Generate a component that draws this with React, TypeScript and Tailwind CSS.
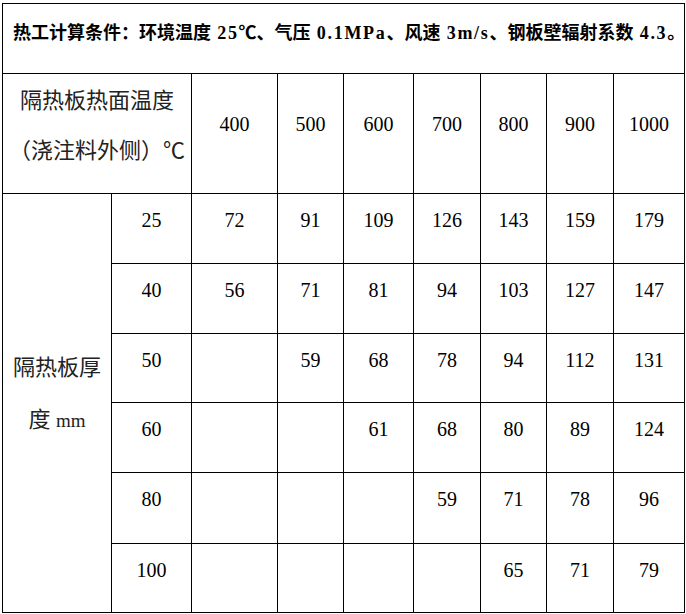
const TEMPS = ["400", "500", "600", "700", "800", "900", "1000"];

const ROWS: { t: string; h: string; v: string[] }[] = [
  { t: "25", h: "h-[70px]", v: ["72", "91", "109", "126", "143", "159", "179"] },
  { t: "40", h: "h-[70px]", v: ["56", "71", "81", "94", "103", "127", "147"] },
  { t: "50", h: "h-[69px]", v: ["", "59", "68", "78", "94", "112", "131"] },
  { t: "60", h: "h-[70px]", v: ["", "", "61", "68", "80", "89", "124"] },
  { t: "80", h: "h-[71px]", v: ["", "", "", "59", "71", "78", "96"] },
  { t: "100", h: "h-[69px]", v: ["", "", "", "", "65", "71", "79"] },
];

const cell = "border border-black align-top text-center";

// 半角字符按等宽宋体的宽度稍微拉开
function Half({ children }: { children: string }) {
  return <span className="tracking-[1.7px]">{children}</span>;
}

export default function App() {
  return (
    <div className="min-h-[614px] w-[686px] bg-white pl-[2px] pt-[3px] font-['Liberation_Serif','Noto_Sans_CJK_SC',serif] text-black">
      <table className="w-[682px] table-fixed border-collapse">
        <colgroup>
          <col className="w-[109px]" />
          <col className="w-[80px]" />
          <col className="w-[86px]" />
          <col className="w-[66px]" />
          <col className="w-[70px]" />
          <col className="w-[67px]" />
          <col className="w-[66px]" />
          <col className="w-[67px]" />
          <col className="w-[71px]" />
        </colgroup>
        <tbody>
          {/* 计算条件 */}
          <tr className="h-[70px]">
            <td
              colSpan={9}
              className="border border-black pl-[10px] pt-[17px] align-top text-[18px] leading-[24px] font-bold whitespace-nowrap"
            >
              热工计算条件：环境温度<Half> 25</Half>℃、气压<Half> 0.1MPa</Half>、风速
              <Half> 3m/s</Half>、钢板壁辐射系数<Half> 4.3</Half>。
            </td>
          </tr>

          {/* 表头 */}
          <tr className="h-[120px]">
            <td colSpan={2} className={`${cell} pt-[2px] text-[22px] leading-[50px] text-[#222]`}>
              <div>隔热板热面温度</div>
              <div>（浇注料外侧）℃</div>
            </td>
            {TEMPS.map((t) => (
              <td key={t} className={`${cell} pt-[38px] text-[20px] leading-[24px]`}>
                {t}
              </td>
            ))}
          </tr>

          {/* 数据 */}
          {ROWS.map((row, i) => (
            <tr key={row.t} className={row.h}>
              {i === 0 && (
                <td rowSpan={6} className={`${cell} pt-[148px] text-[22px] leading-[52px] text-[#222]`}>
                  <div>隔热板厚</div>
                  <div>
                    度 <span className="text-[19px]">mm</span>
                  </div>
                </td>
              )}
              <td className={`${cell} pt-[14px] text-[20px] leading-[24px]`}>{row.t}</td>
              {row.v.map((v, j) => (
                <td key={j} className={`${cell} pt-[14px] text-[20px] leading-[24px]`}>
                  {v}
                </td>
              ))}
            </tr>
          ))}
        </tbody>
      </table>
    </div>
  );
}
